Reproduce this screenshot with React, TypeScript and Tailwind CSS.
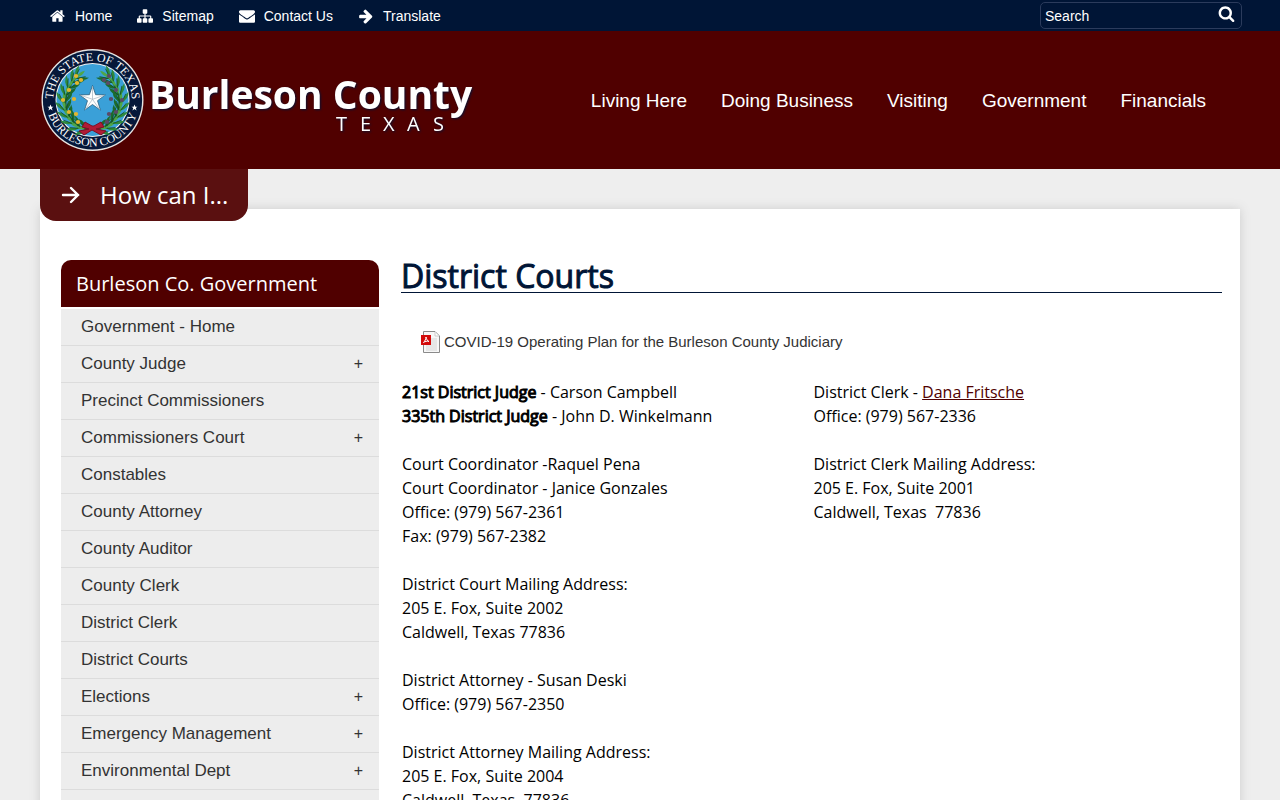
import { useState } from "react";

type IconProps = { path: string; className?: string };

type MenuItem = { label: string; expandable?: boolean };

const icons = {
  home: "M1408 992v480q0 26-19 45t-45 19h-384v-384h-256v384h-384q-26 0-45-19t-19-45v-480q0-1 .5-3t.5-3l575-474 575 474q1 2 1 6zm223-69l-62 74q-8 9-21 11h-3q-13 0-21-7l-692-577-692 577q-12 8-24 7-13-2-21-11l-62-74q-8-10-7-23.5t11-21.5l719-599q32-26 76-26t76 26l244 204v-195q0-14 9-23t23-9h192q14 0 23 9t9 23v408l219 182q10 8 11 21.5t-7 23.5z",
  sitemap:
    "M1792 1248v320q0 40-28 68t-68 28h-320q-40 0-68-28t-28-68v-320q0-40 28-68t68-28h96v-192h-512v192h96q40 0 68 28t28 68v320q0 40-28 68t-68 28h-320q-40 0-68-28t-28-68v-320q0-40 28-68t68-28h96v-192h-512v192h96q40 0 68 28t28 68v320q0 40-28 68t-68 28h-320q-40 0-68-28t-28-68v-320q0-40 28-68t68-28h96v-192q0-52 38-90t90-38h512v-192h-96q-40 0-68-28t-28-68v-320q0-40 28-68t68-28h320q40 0 68 28t28 68v320q0 40-28 68t-68 28h-96v192h512q52 0 90 38t38 90v192h96q40 0 68 28t28 68z",
  envelope:
    "M1792 710v794q0 66-47 113t-113 47h-1472q-66 0-113-47t-47-113v-794q44 49 101 87 362 246 497 345 57 42 92.5 65.5t94.5 48 110 24.5h2q51 0 110-24.5t94.5-48 92.5-65.5q170-123 498-345 57-39 100-87zm0-294q0 79-49 151t-122 123q-376 261-468 325-10 7-42.5 31t-54 38.5-52 32.5-57.5 27-50 9h-2q-23 0-50-9t-57.5-27-52-32.5-54-38.5-42.5-31q-91-64-262-182.5t-205-142.5q-62-42-117-115.5t-55-136.5q0-78 41.5-130t118.5-52h1472q65 0 112.5 47t47.5 113z",
  arrow:
    "M1600 960q0 54-37 91l-651 651q-39 37-91 37-51 0-90-37l-75-75q-38-38-38-91t38-91l293-293h-704q-52 0-84.5-37.5t-32.5-90.5v-128q0-53 32.5-90.5t84.5-37.5h704l-293-294q-38-36-38-90t38-90l75-75q38-38 90-38 53 0 91 38l651 651q37 35 37 90z",
  search:
    "M1216 832q0-185-131.5-316.5t-316.5-131.5-316.5 131.5-131.5 316.5 131.5 316.5 316.5 131.5 316.5-131.5 131.5-316.5zm512 832q0 52-38 90t-90 38q-54 0-90-38l-343-342q-179 124-399 124-143 0-273.5-55.5t-225-150-150-225-55.5-273.5 55.5-273.5 150-225 225-150 273.5-55.5 273.5 55.5 225 150 150 225 55.5 273.5q0 220-124 399l343 343q37 37 37 90z",
};

const topLinks = [
  { label: "Home", icon: icons.home },
  { label: "Sitemap", icon: icons.sitemap },
  { label: "Contact Us", icon: icons.envelope },
  { label: "Translate", icon: icons.arrow },
];

const mainLinks = [
  "Living Here",
  "Doing Business",
  "Visiting",
  "Government",
  "Financials",
];

const menuItems: MenuItem[] = [
  { label: "Government - Home" },
  { label: "County Judge", expandable: true },
  { label: "Precinct Commissioners" },
  { label: "Commissioners Court", expandable: true },
  { label: "Constables" },
  { label: "County Attorney" },
  { label: "County Auditor" },
  { label: "County Clerk" },
  { label: "District Clerk" },
  { label: "District Courts" },
  { label: "Elections", expandable: true },
  { label: "Emergency Management", expandable: true },
  { label: "Environmental Dept", expandable: true },
  { label: "Extension Office" },
];

function Icon({ path, className }: IconProps) {
  return (
    <svg
      viewBox="0 0 1792 1792"
      fill="currentColor"
      aria-hidden="true"
      className={className}
    >
      <path d={path} />
    </svg>
  );
}

// Leaf positions along one side of the wreath, from the ribbon upwards.
const branch = [
  [45, 80, 195],
  [38, 78, 212],
  [32, 73, 228],
  [28, 67, 244],
  [25, 60, 258],
  [24, 52, 272],
  [26, 45, 286],
  [29, 38, 300],
  [33, 32, 312],
  [37, 28, 322],
];

const acorns = [
  [36, 27],
  [41, 31],
  [37, 34],
  [29, 41],
  [34, 50],
  [23, 51],
  [29, 63],
  [36, 65],
  [38, 73],
];

function Wreath({ fruit }: { fruit: string }) {
  return (
    <g>
      <path
        d="M50 81C27 77 15 51 38 26"
        fill="none"
        stroke="#1c5a2c"
        strokeWidth="2"
      />
      {branch.map(([x, y, angle]) => (
        <g key={angle} transform={`translate(${x} ${y}) rotate(${angle})`}>
          <path d="M-2 0Q2 -8 9 -8Q5 -3 -2 0Z" fill="#2f8a3c" />
          <path d="M-2 0Q2 8 9 8Q5 3 -2 0Z" fill="#1d6b2c" />
          <path d="M0 0Q5 -3 10 0Q5 3 0 0Z" fill="#4fa648" />
          <path d="M-1 1L7 5M-1 -1L7 -5" stroke="#0f4a22" strokeWidth="0.7" />
        </g>
      ))}
      {acorns.map(([x, y]) => (
        <ellipse key={`${x}-${y}`} cx={x} cy={y} rx="2.2" ry="1.9" fill={fruit} />
      ))}
    </g>
  );
}

function Logo() {
  return (
    <svg
      viewBox="0 0 440 104"
      className="h-[104px] w-[440px]"
      role="img"
      aria-label="Burleson County Texas"
    >
      <defs>
        <path id="seal-top" d="M13.500 57A39.4 39.4 0 1 1 91.500 57" />
        <path id="seal-bottom" d="M6 51A46.5 46.5 0 0 0 99 51" />
      </defs>
      <circle cx="52.5" cy="51" r="51" fill="#e8e6e3" />
      <circle cx="52.5" cy="51" r="49.6" fill="#06183a" />
      <circle cx="52.5" cy="51" r="37" fill="#f2f2f2" />
      <circle cx="52.5" cy="51" r="36" fill="#3aa0d8" />
      <Wreath fruit="#e3b52f" />
      <g transform="translate(105 0) scale(-1 1)">
        <Wreath fruit="#5b4a66" />
      </g>
      <path
        d="M52 77L45 73L42 78L49 80L39 82L44 86L52 81L61 86L66 82L56 80L64 78L61 73L54 77Z"
        fill="#b01c36"
        stroke="#7c1024"
        strokeWidth="1"
      />
      <path
        d="M52.500 36.500L55.600 45.700L65.300 45.900L57.500 51.700L60.400 61.100L52.500 55.500L44.600 61.100L47.500 51.700L39.700 45.900L49.400 45.700Z"
        fill="#fff"
        stroke="#27506b"
        strokeWidth="0.7"
      />
      <path
        d="M52.500 37V50.300L65 46M52.500 50.300L60 61M52.500 50.300L45 61M52.500 50.300L40 46"
        fill="none"
        stroke="#a5b3bd"
        strokeWidth="0.7"
      />
      <path
        d="M10.500 55.500L11.400 57.700H13.500L11.800 59.100L12.500 61.500L10.500 60L8.500 61.500L9.200 59.100L7.500 57.700H9.600ZM94.500 55.500L95.400 57.700H97.500L95.800 59.100L96.500 61.500L94.500 60L92.500 61.500L93.200 59.100L91.500 57.700H93.600Z"
        fill="#fff"
      />
      <g
        fill="#fff"
        fontFamily="Liberation Serif, serif"
        fontSize="12"
        textAnchor="middle"
      >
        <text>
          <textPath href="#seal-top" startOffset="50%">
            THE STATE OF TEXAS
          </textPath>
        </text>
        <text>
          <textPath href="#seal-bottom" startOffset="50%">
            BURLESON COUNTY
          </textPath>
        </text>
      </g>
      <g className="drop-shadow-[1px_1px_1px_#0b1030]">
        <text
          x="109"
          y="60"
          fontSize="39"
          fontFamily="Open Sans, sans-serif"
          fontWeight="700"
          fill="#fff"
        >
          Burleson County
        </text>
        <text
          x="296 320 343 367 393"
          y="82"
          fontSize="20"
          fontFamily="Open Sans, sans-serif"
          fill="#fff"
        >
          TEXAS
        </text>
      </g>
    </svg>
  );
}

function PdfIcon() {
  return (
    <svg viewBox="0 0 20 24" className="h-6 w-5 shrink-0" aria-hidden="true">
      <path d="M2.500 1.500H14L18.500 6V22.500H2.500Z" fill="#f7f7f7" stroke="#8a8a8a" />
      <path d="M5 8H16V21H5Z" fill="#e6e6e6" />
      <path d="M14 2V6H18" fill="#fff" stroke="#ccc" />
      <path d="M0 5H10V15H0Z" fill="#d30b0b" />
      <path
        d="M2.500 12.500C4 11 5 9 5 7C5.500 9.500 6.500 11 8 11.500C6 10.800 4 11.500 2.500 12.500Z"
        fill="none"
        stroke="#fff"
      />
    </svg>
  );
}

function TopBar() {
  const [query, setQuery] = useState("");

  return (
    <div className="bg-[#001536] text-sm text-white">
      <div className="mx-auto flex h-[31px] max-w-[1200px] items-center justify-between">
        <nav className="flex gap-[25px] pl-2.5">
          {topLinks.map((link) => (
            <a key={link.label} href="#" className="flex items-center gap-[9px]">
              <Icon path={link.icon} className="size-4" />
              {link.label}
            </a>
          ))}
        </nav>
        <form
          className="mr-[-2px] flex h-[27px] w-[202px] items-center rounded-[5px] border border-[#2b3b5c] px-1"
          onSubmit={(event) => event.preventDefault()}
        >
          <input
            type="text"
            aria-label="Search"
            placeholder="Search"
            value={query}
            onChange={(event) => setQuery(event.target.value)}
            className="min-w-0 flex-1 bg-transparent outline-none placeholder:text-white"
          />
          <button type="submit" aria-label="Submit search" className="px-0.5 pb-1">
            <Icon path={icons.search} className="size-[17px]" />
          </button>
        </form>
      </div>
    </div>
  );
}

function Header() {
  return (
    <header className="bg-[#500000] text-white">
      <div className="mx-auto flex h-[138px] max-w-[1200px] items-center justify-between pt-0.5 pr-[34px]">
        <a href="#">
          <Logo />
        </a>
        <nav className="flex gap-[34px] text-[19px]">
          {mainLinks.map((label) => (
            <a key={label} href="#" className="whitespace-nowrap">
              {label}
            </a>
          ))}
        </nav>
      </div>
    </header>
  );
}

function Sidebar() {
  return (
    <aside className="w-[318px] shrink-0">
      <h2 className="mb-0.5 flex h-[47px] items-center rounded-t-[10px] bg-[#500000] px-[15px] font-['Open_Sans',sans-serif] text-xl text-white">
        Burleson Co. Government
      </h2>
      <ul className="bg-[#ededed] text-[17px] text-[#333]">
        {menuItems.map((item) => (
          <li key={item.label} className="border-b border-[#dcdcdc]">
            <a
              href="#"
              className="flex h-9 items-center justify-between pr-4 pl-5"
            >
              {item.label}
              {item.expandable ? <span className="text-base">+</span> : null}
            </a>
          </li>
        ))}
      </ul>
    </aside>
  );
}

function Contacts() {
  return (
    <div className="mt-[26px] grid grid-cols-2 px-px font-['Open_Sans',sans-serif] text-base text-black">
      <div className="space-y-6">
        <p>
          <strong className="font-normal [-webkit-text-stroke:1px]">
            21st District Judge
          </strong>{" "}
          - Carson Campbell
          <br />
          <strong className="font-normal [-webkit-text-stroke:1px]">
            335th District Judge
          </strong>{" "}
          - John D. Winkelmann
        </p>
        <p>
          Court Coordinator -Raquel Pena
          <br />
          Court Coordinator - Janice Gonzales
          <br />
          Office: (979) 567-2361
          <br />
          Fax: (979) 567-2382
        </p>
        <p>
          District Court Mailing Address:
          <br />
          205 E. Fox, Suite 2002
          <br />
          Caldwell, Texas 77836
        </p>
        <p>
          District Attorney - Susan Deski
          <br />
          Office: (979) 567-2350
        </p>
        <p>
          District Attorney Mailing Address:
          <br />
          205 E. Fox, Suite 2004
          <br />
          Caldwell, Texas&nbsp; 77836
        </p>
      </div>
      <div className="space-y-6 pl-0.5">
        <p>
          District Clerk -{" "}
          <a href="#" className="text-[#500000] underline">
            Dana Fritsche
          </a>
          <br />
          Office: (979) 567-2336
        </p>
        <p>
          District Clerk Mailing Address:
          <br />
          205 E. Fox, Suite 2001
          <br />
          Caldwell, Texas&nbsp; 77836
        </p>
      </div>
    </div>
  );
}

export default function App() {
  return (
    <div className="min-h-screen bg-[#eee] font-['Liberation_Sans',Arial,sans-serif]">
      <TopBar />
      <Header />

      <div className="mx-auto max-w-[1200px]">
        <button
          type="button"
          className="relative z-10 -mb-3 flex h-[52px] w-[208px] items-center gap-5 rounded-b-2xl bg-[#5a1010] pl-[21px] font-['Open_Sans',sans-serif] text-2xl text-white"
        >
          <svg
            viewBox="0 0 19 18"
            fill="none"
            stroke="currentColor"
            strokeWidth="2.4"
            strokeLinecap="round"
            aria-hidden="true"
            className="h-[18px] w-[19px]"
          >
            <path d="M2 9H17M10 2L17 9L10 16" />
          </svg>
          How can I...
        </button>

        <main className="flex gap-[22px] bg-white pt-[51px] pr-[18px] pl-[21px] shadow-[0_0_10px_#ccc]">
          <Sidebar />
          <section className="min-w-0 flex-1">
            <h1 className="border-b border-[#001536] font-['Open_Sans',sans-serif] text-[32px] leading-8 text-[#001536] [-webkit-text-stroke:1px]">
              District Courts
            </h1>
            <a
              href="#"
              className="mt-[37px] ml-5 flex items-center gap-[3px] text-[15px] text-[#333]"
            >
              <PdfIcon />
              COVID-19 Operating Plan for the Burleson County Judiciary
            </a>
            <Contacts />
          </section>
        </main>
      </div>
    </div>
  );
}
